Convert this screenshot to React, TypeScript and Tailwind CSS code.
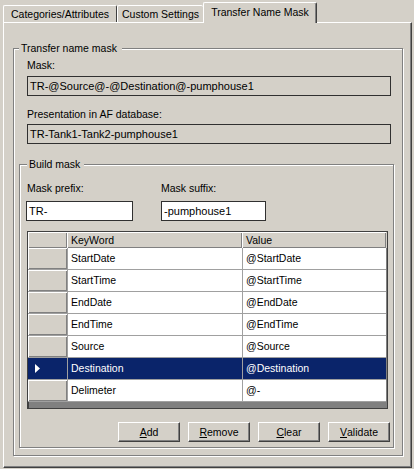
import React from "react"

const rows = [
  { keyword: "StartDate", value: "@StartDate" },
  { keyword: "StartTime", value: "@StartTime" },
  { keyword: "EndDate", value: "@EndDate" },
  { keyword: "EndTime", value: "@EndTime" },
  { keyword: "Source", value: "@Source" },
  { keyword: "Destination", value: "@Destination", selected: true },
  { keyword: "Delimeter", value: "@-" },
]

const raised = "shadow-[inset_1px_1px_0_#ffffff,inset_-1px_-1px_0_#808080]"

function Tab({ label, width, active }: { label: string; width: string; active?: boolean }) {
  if (active) {
    return (
      <div
        className={`${width} relative z-10 -mb-px flex h-[21px] items-start justify-center rounded-t-[2px] border-l border-t border-r border-white border-r-[#404040] bg-[#d4d0c8] pt-[3px] shadow-[inset_-1px_0_0_#808080]`}
      >
        {label}
      </div>
    )
  }
  return (
    <div
      className={`${width} flex h-[17px] items-center justify-center rounded-t-[2px] border-l border-t border-white pt-px`}
    >
      {label}
    </div>
  )
}

function Btn({ children }: { children: React.ReactNode }) {
  return (
    <button className="flex h-[20px] w-[62px] items-center justify-center border border-white border-r-[#404040] border-b-[#404040] bg-[#d4d0c8] shadow-[inset_-1px_-1px_0_#808080]">
      {children}
    </button>
  )
}

export default function App() {
  return (
    <div className="h-[469px] w-[414px] overflow-hidden bg-[#d4d0c8] pt-[2px] pl-[3px] font-['Liberation_Sans',Arial,sans-serif] text-[10.5px] leading-[13px] text-black">
      {/* tab strip */}
      <div className="flex h-[20px] items-end">
        <div className="flex h-[17px] w-[114px] items-center justify-center rounded-t-[2px] border-l border-t border-r border-white border-r-[#404040] pt-px">
          Categories/Attributes
        </div>
        <Tab label="Custom Settings" width="w-[86px]" />
        <Tab label="Transfer Name Mask" width="w-[114px]" active />
      </div>

      {/* page */}
      <div className="h-[446px] w-[409px] border border-white border-r-[#404040] border-b-[#404040] shadow-[inset_-1px_-1px_0_#808080]">
        <fieldset className="ml-[9px] mt-[18px] w-[390px] border border-[#808080] pb-[7px] pl-[5px] shadow-[1px_1px_0_#ffffff,inset_1px_1px_0_#ffffff]">
          <legend className="bg-[#d4d0c8] pl-[2px] pr-[5px] leading-[14px]">Transfer name mask</legend>

          <div className="ml-[8px] mt-[4px]">Mask:</div>
          <div className="ml-[8px] mt-[4px] flex h-[20px] w-[364px] items-center border border-[#303030] pl-[2px] text-[11px]">
            TR-@Source@-@Destination@-pumphouse1
          </div>

          <div className="ml-[8px] mt-[12px]">Presentation in AF database:</div>
          <div className="ml-[8px] mt-[3px] flex h-[20px] w-[364px] items-center border border-[#303030] pl-[2px] text-[11px]">
            TR-Tank1-Tank2-pumphouse1
          </div>

          <fieldset className="mt-[13px] w-[375px] border border-[#808080] pb-[5px] pl-[6px] shadow-[1px_1px_0_#ffffff,inset_1px_1px_0_#ffffff]">
            <legend className="ml-px bg-[#d4d0c8] pl-[2px] pr-[4px] leading-[14px]">Build mask</legend>

            <div className="mt-[11px] flex gap-[28px]">
              <div className="flex w-[107px] flex-col">
                <div className="pl-px">Mask prefix:</div>
                <div className="mt-[6px] flex h-[20px] items-center border border-[#303030] bg-white pl-[2px] text-[11px]">
                  TR-
                </div>
              </div>
              <div className="flex w-[105px] flex-col">
                <div>Mask suffix:</div>
                <div className="mt-[6px] flex h-[20px] items-center border border-[#303030] bg-white pl-[2px] text-[11px]">
                  -pumphouse1
                </div>
              </div>
            </div>

            {/* grid */}
            <div className="ml-px mt-[10px] flex h-[178px] w-[361px] flex-col border border-[#404040] bg-[#808080] shadow-[inset_1px_1px_0_#404040]">
              <div className="flex h-[16px] bg-[#d4d0c8]">
                <div className={`w-[39px] ${raised}`} />
                <div className={`flex w-[175px] items-center pl-[4px] ${raised}`}>KeyWord</div>
                <div className={`flex w-[144px] items-center pl-[4px] ${raised}`}>Value</div>
              </div>
              {rows.map((row) => (
                <div key={row.keyword} className="flex h-[22px]">
                  <div
                    className={`flex w-[39px] items-center pl-[7px] ${
                      row.selected ? "bg-[#0a246a]" : `bg-[#d4d0c8] ${raised}`
                    } border-b border-[#a0a0a0]`}
                  >
                    {row.selected && (
                      <svg width="5" height="9" viewBox="0 0 5 9">
                        <path d="M0 0 L5 4.5 L0 9 Z" fill="#ffffff" />
                      </svg>
                    )}
                  </div>
                  <div
                    className={`flex w-[175px] items-center border-b border-l border-[#a0a0a0] pl-[3px] ${
                      row.selected ? "bg-[#0a246a] text-white" : "bg-white"
                    }`}
                  >
                    {row.keyword}
                  </div>
                  <div
                    className={`flex w-[144px] items-center border-b border-l border-[#a0a0a0] pl-[3px] ${
                      row.selected ? "bg-[#0a246a] text-white" : "bg-white"
                    }`}
                  >
                    {row.value}
                  </div>
                </div>
              ))}
            </div>

            <div className="mt-[13px] flex w-[364px] justify-end gap-[8px]">
              <Btn>
                <span className="underline">A</span>dd
              </Btn>
              <Btn>
                <span className="underline">R</span>emove
              </Btn>
              <Btn>
                <span className="underline">C</span>lear
              </Btn>
              <Btn>
                <span className="underline">V</span>alidate
              </Btn>
            </div>
          </fieldset>
        </fieldset>
      </div>
    </div>
  )
}
